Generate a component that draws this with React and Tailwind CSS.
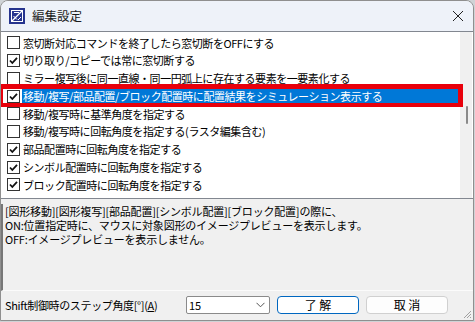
import React from 'react';

const font = { fontFamily: '"Noto Sans CJK JP", "Liberation Sans", sans-serif' };

const rows = [
  { label: '窓切断対応コマンドを終了したら窓切断をOFFにする', checked: false },
  { label: '切り取り/コピーでは常に窓切断する', checked: true },
  { label: 'ミラー複写後に同一直線・同一円弧上に存在する要素を一要素化する', checked: false },
  { label: '移動/複写/部品配置/ブロック配置時に配置結果をシミュレーション表示する', checked: true, selected: true },
  { label: '移動/複写時に基準角度を指定する', checked: false },
  { label: '移動/複写時に回転角度を指定する(ラスタ編集含む)', checked: false },
  { label: '部品配置時に回転角度を指定する', checked: true },
  { label: 'シンボル配置時に回転角度を指定する', checked: true },
  { label: 'ブロック配置時に回転角度を指定する', checked: true },
];

const CheckBox = ({ checked }) => (
  <svg width="13" height="13" viewBox="0 0 13 13" className="shrink-0">
    <rect x="0.5" y="0.5" width="12" height="12" fill="#fff" stroke="#333" />
    {checked && <path d="M3 6.5 L5.3 9 L10 3.8" fill="none" stroke="#111" strokeWidth="1.8" />}
  </svg>
);

const AppIcon = () => (
  <svg width="16" height="16" viewBox="0 0 16 16">
    <rect x="0" y="0" width="16" height="16" fill="#26348e" />
    <rect x="2.5" y="2.5" width="11" height="11" fill="none" stroke="#fff" strokeWidth="1" />
    <path d="M3 13 L13 3" stroke="#fff" strokeWidth="1.2" />
    <path d="M5 4.5 L10 4.5 M4.5 8 L8 11.5 M9 12 L12 9" stroke="#fff" strokeWidth="1" />
  </svg>
);

export default function App() {
  return (
    <div className="w-[475px] h-[322px] bg-[#cfd3d6] overflow-hidden" style={font}>
      <div className="relative w-[474px] h-[321px] bg-[#f0f0f0] rounded-t-[8px] border border-[#8f8f8f] flex flex-col overflow-hidden">
        {/* title bar */}
        <div className="h-[30px] shrink-0 bg-[#eef2f9] flex items-center pl-[8px] pr-[9px]">
          <AppIcon />
          <span className="ml-[7px] text-[12.5px] text-[#1b1b1b]">編集設定</span>
          <div className="ml-auto">
            <svg width="12" height="12" viewBox="0 0 12 12">
              <path d="M1 1 L11 11 M11 1 L1 11" stroke="#222" strokeWidth="1" />
            </svg>
          </div>
        </div>

        {/* list */}
        <div className="h-[168px] shrink-0 bg-white border-t border-b border-[#828790] flex">
          <div className="flex-1 pt-[2px]">
            {rows.map((r, i) => (
              <div key={i} className="h-[17.75px] flex items-center pl-[6px]">
                <CheckBox checked={r.checked} />
                <div
                  className={
                    'ml-[2px] flex-1 h-full flex items-center pl-[1px] text-[11px] tracking-[-0.45px] whitespace-nowrap ' +
                    (r.selected ? 'bg-[#0078d7] text-white' : 'text-black')
                  }
                >
                  {r.label}
                </div>
              </div>
            ))}
          </div>
          <div className="w-[12px] bg-[#f0f0f0] relative mr-[1px]">
            <div className="absolute left-[6px] top-[74px] w-[2px] h-[18px] bg-[#8a8a8a] rounded-full" />
          </div>
        </div>

        {/* description */}
        <div className="mt-[5px] h-[87px] shrink-0 border-l-2 border-[#777] border-b border-b-[#fbfbfb] pl-[2px] text-[11px] leading-[14px] tracking-[-0.2px] text-black">
          <div>[図形移動][図形複写][部品配置][シンボル配置][ブロック配置]の際に、</div>
          <div>ON:位置指定時に、マウスに対象図形のイメージプレビューを表示します。</div>
          <div>OFF:イメージプレビューを表示しません。</div>
        </div>

        {/* bottom row */}
        <div className="flex items-center mt-[5px] h-[18px]">
          <span className="ml-[4px] text-[11px] tracking-[-0.35px] text-black whitespace-nowrap">
            Shift制御時のステップ角度[°](<span className="underline">A</span>)
          </span>
          <div className="ml-auto mr-[25px] flex items-center gap-[7px]">
            <div className="w-[84px] h-[18px] bg-white border border-[#8a8a8a] rounded-[2px] flex items-center pl-[2px] pr-[4px] text-[11px] text-black">
              15
              <svg className="ml-auto" width="9" height="6" viewBox="0 0 9 6">
                <path d="M0.5 0.8 L4.5 4.8 L8.5 0.8" fill="none" stroke="#555" strokeWidth="1" />
              </svg>
            </div>
            <div className="w-[82px] h-[18px] bg-white border-[1.5px] border-[#0067c0] rounded-[4px] flex items-center justify-center text-[12px] text-black">
              了&nbsp;解
            </div>
            <div className="w-[82px] h-[18px] bg-[#fdfdfd] border border-[#d0d0d0] rounded-[4px] flex items-center justify-center text-[12px] text-black">
              取&nbsp;消
            </div>
          </div>
        </div>

        {/* resize grip */}
        <svg className="absolute right-[1px] bottom-[1px]" width="10" height="10" viewBox="0 0 10 10">
          <path d="M9 2 L2 9 M9 5 L5 9 M9 8 L8 9" stroke="#a0a0a0" strokeWidth="1" />
        </svg>

        {/* annotation highlight */}
        <div className="absolute left-[-1px] top-[83px] w-[463px] h-[23px] border-t-[5px] border-b-[4px] border-l-[3px] border-r-[5px] border-[#e8000b]" />
      </div>
    </div>
  );
}
